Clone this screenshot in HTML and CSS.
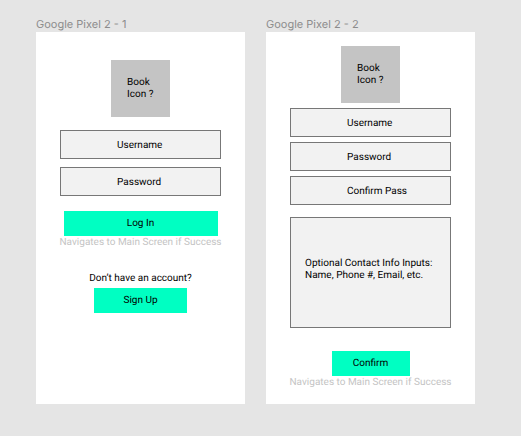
FILE: index.html
```html
<!DOCTYPE html>
<html lang="en">
<head>
<meta charset="utf-8">
<meta name="viewport" content="width=device-width, initial-scale=1">
<title>Login wireframes</title>
<link rel="stylesheet" href="styles.css">
</head>
<body>
<main class="canvas">
  <section class="frame">
    <h2 class="frame-title">Google Pixel 2 - 1</h2>
    <form class="screen screen-login">
      <div class="logo">Book<br>Icon ?</div>
      <div class="fields">
        <input class="field" type="text" placeholder="Username" aria-label="Username">
        <input class="field" type="password" placeholder="Password" aria-label="Password">
      </div>
      <button class="button button-wide" type="button">Log In</button>
      <p class="note">Navigates to Main Screen if Success</p>
      <p class="prompt">Don’t have an account?</p>
      <button class="button button-medium" type="button">Sign Up</button>
    </form>
  </section>
  <section class="frame">
    <h2 class="frame-title">Google Pixel 2 - 2</h2>
    <form class="screen screen-signup">
      <div class="logo">Book<br>Icon ?</div>
      <div class="fields">
        <input class="field" type="text" placeholder="Username" aria-label="Username">
        <input class="field" type="password" placeholder="Password" aria-label="Password">
        <input class="field" type="password" placeholder="Confirm Pass" aria-label="Confirm Pass">
      </div>
      <textarea class="contact" aria-label="Optional contact info" placeholder="Optional Contact Info Inputs:&#10;Name, Phone #, Email, etc."></textarea>
      <button class="button button-small" type="button">Confirm</button>
      <p class="note">Navigates to Main Screen if Success</p>
    </form>
  </section>
</main>
</body>
</html>
```
FILE: styles.css
```css
* {
  box-sizing: border-box;
}

body {
  margin: 0;
  background: #e5e5e5;
  color: #000;
  font: 10px/12px Roboto, sans-serif;
  text-rendering: geometricPrecision;
}

input,
textarea,
button {
  margin: 0;
  font: inherit;
  color: inherit;
  border-radius: 0;
  text-rendering: inherit;
}

.canvas {
  display: grid;
  grid-template-columns: 1fr 1fr;
  gap: 21px;
  min-height: 100vh;
  padding: 16px 46px 32px 36px;
}

.frame {
  display: flex;
  flex-direction: column;
}

.frame-title {
  margin: 0;
  color: #8c8c8c;
  font: 400 11px/16px Inter, sans-serif;
}

.screen {
  flex: 1;
  display: flex;
  flex-direction: column;
  align-items: center;
  background: #fff;
}

.screen-login {
  padding-top: 28px;
}

.screen-signup {
  padding-top: 14px;
}

.logo {
  width: 59px;
  height: 57px;
  padding: 17px 0 0 16px;
  background: #c4c4c4;
}

.fields {
  display: flex;
  flex-direction: column;
  align-items: center;
  width: 100%;
}

.screen-login .fields {
  gap: 8px;
  margin: 13px 0 15px;
}

.screen-signup .fields {
  gap: 5px;
  margin: 5px 0 12px;
}

.field {
  width: 77%;
  height: 29px;
  padding: 1px 0 0 56px;
  border: 1px solid #777;
  background: #f2f2f2;
}

.field::placeholder,
.contact::placeholder {
  color: #000;
  opacity: 1;
}

.contact {
  width: 77%;
  height: 111px;
  padding: 40px 0 0 14px;
  border: 1px solid #777;
  background: #f2f2f2;
  resize: none;
  overflow: hidden;
  white-space: pre;
}

.button {
  height: 25px;
  padding: 0;
  border: 0;
  background: #00ffc2;
}

.button-wide {
  width: 154px;
}

.button-medium {
  width: 93px;
}

.button-small {
  width: 78px;
  margin-top: 23px;
}

.note {
  margin: 0;
  padding-top: 1px;
  color: #c4c4c4;
  white-space: nowrap;
}

.prompt {
  margin: 24px 0 3px;
}
```
